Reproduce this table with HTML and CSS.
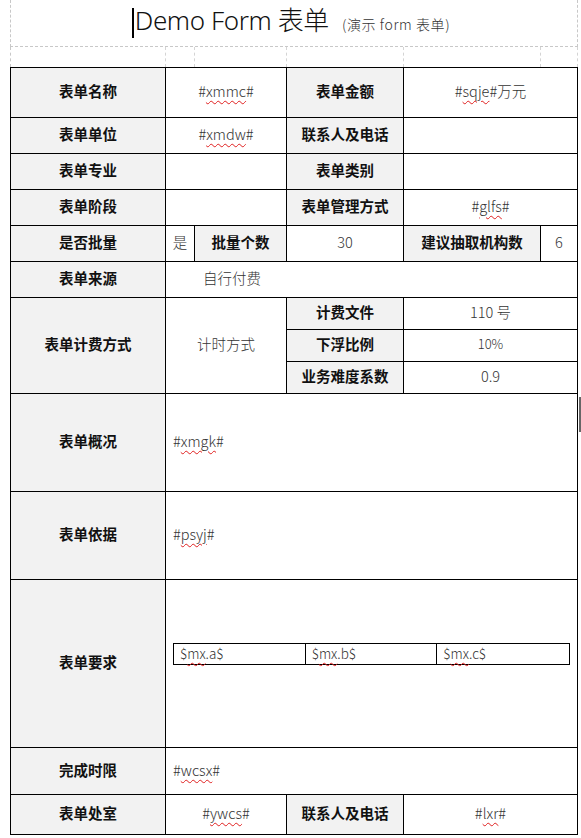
FILE: index.html
```html
<!DOCTYPE html>
<html lang="zh-CN">
<head>
<meta charset="utf-8">
<title>Demo Form 表单</title>
<link rel="stylesheet" href="styles.css">
</head>
<body>
<div class="page">
  <div class="title-block">
    <h1 class="title"><span class="caret"></span>Demo Form 表单</h1>
    <span class="subtitle">(演示 form 表单)</span>
  </div>
  <div class="ghost-row">
    <div></div><div></div><div></div><div></div><div></div><div></div>
  </div>
  <div class="form">
    <div class="c lbl">表单名称</div>
    <div class="c val s2">#<span class="sp">xmmc</span>#</div>
    <div class="c lbl">表单金额</div>
    <div class="c val s2">#<span class="sp">sqje</span>#万元</div>

    <div class="c lbl">表单单位</div>
    <div class="c val s2">#<span class="sp">xmdw</span>#</div>
    <div class="c lbl">联系人及电话</div>
    <div class="c val s2"></div>

    <div class="c lbl">表单专业</div>
    <div class="c val s2"></div>
    <div class="c lbl">表单类别</div>
    <div class="c val s2"></div>

    <div class="c lbl">表单阶段</div>
    <div class="c val s2"></div>
    <div class="c lbl">表单管理方式</div>
    <div class="c val s2">#<span class="sp">glfs</span>#</div>

    <div class="c lbl">是否批量</div>
    <div class="c val">是</div>
    <div class="c lbl">批量个数</div>
    <div class="c val">30</div>
    <div class="c lbl">建议抽取机构数</div>
    <div class="c val">6</div>

    <div class="c lbl">表单来源</div>
    <div class="c val s5 offset">自行付费</div>

    <div class="c lbl r3">表单计费方式</div>
    <div class="c val s2 r3">计时方式</div>
    <div class="c lbl">计费文件</div>
    <div class="c val s2">110 号</div>
    <div class="c lbl">下浮比例</div>
    <div class="c val s2 pct">10%</div>
    <div class="c lbl">业务难度系数</div>
    <div class="c val s2">0.9</div>

    <div class="c lbl">表单概况</div>
    <div class="c val s5 left">#<span class="sp">xmgk</span>#</div>

    <div class="c lbl">表单依据</div>
    <div class="c val s5 left">#<span class="sp">psyj</span>#</div>

    <div class="c lbl">表单要求</div>
    <div class="c val s5 req">
      <div class="inner">
        <div class="ic">$<span class="sp">mx</span>.a$</div>
        <div class="ic">$<span class="sp">mx</span>.b$</div>
        <div class="ic">$<span class="sp">mx</span>.c$</div>
      </div>
    </div>

    <div class="c lbl">完成时限</div>
    <div class="c val s5 left">#<span class="sp">wcsx</span>#</div>

    <div class="c lbl">表单处室</div>
    <div class="c val s2">#<span class="sp">ywcs</span>#</div>
    <div class="c lbl">联系人及电话</div>
    <div class="c val s2">#<span class="sp">lxr</span>#</div>
  </div>
</div>
<div class="edge-mark"></div>
</body>
</html>
```
FILE: styles.css
```css
html, body {
  margin: 0;
  padding: 0;
  background: #fff;
}
body {
  font-family: "Noto Sans CJK SC", "Noto Sans", sans-serif;
  color: #000;
  position: relative;
  height: 838px;
  overflow: hidden;
}
.page {
  margin-left: 10px;
  width: 568px;
}
.title-block {
  box-sizing: border-box;
  height: 47px;
  border-left: 1px dashed #c8c8c8;
  border-right: 1px dashed #c8c8c8;
  border-bottom: 1px dashed #c8c8c8;
  display: flex;
  justify-content: center;
  align-items: baseline;
  padding-right: 3px;
  padding-top: 1px;
}
.title {
  margin: 0;
  font-family: "Noto Sans", "Noto Sans CJK SC", sans-serif;
  font-weight: 300;
  font-size: 26px;
  letter-spacing: -0.4px;
  line-height: 38px;
  color: #111;
  position: relative;
}
.caret {
  position: absolute;
  left: -3px;
  top: 7px;
  width: 2px;
  height: 30px;
  background: #000;
}
.subtitle {
  margin-left: 13px;
  font-size: 14px;
  letter-spacing: 0.6px;
  font-weight: 300;
  color: #333;
}
.ghost-row {
  display: grid;
  grid-template-columns: 155px 29px 92px 117px 137px 37px;
  height: 20px;
  border-left: 1px dashed #c8c8c8;
}
.ghost-row div {
  border-right: 1px dashed #d4d4d4;
}
.form {
  display: grid;
  grid-template-columns: 155px 29px 92px 117px 137px 37px;
  grid-template-rows: 50px 36px 36px 36px 36px 36px 32px 32px 32px 98px 88px 168px 47px 40px;
  border-top: 1px solid #000;
  border-left: 1px solid #000;
}
.c {
  box-sizing: border-box;
  border-right: 1px solid #000;
  border-bottom: 1px solid #000;
  display: flex;
  align-items: center;
  justify-content: center;
  font-size: 14.5px;
  line-height: 18px;
  padding-bottom: 3px;
  white-space: nowrap;
}
.lbl {
  background: #f2f2f2;
  font-weight: 700;
  color: #111;
}
.val {
  font-weight: 300;
  color: #333;
}
.s2 { grid-column: span 2; }
.s5 { grid-column: span 5; }
.r3 { grid-row: span 3; }
.offset {
  justify-content: flex-start;
  padding-left: 37px;
}
.left {
  justify-content: flex-start;
  padding-left: 7px;
}
.pct { font-size: 13px; }
.sp {
  text-decoration: underline wavy #e02020;
  text-decoration-thickness: 1px;
  text-underline-offset: 3px;
}
.req {
  padding: 0 7px 20px 7px;
  align-items: center;
}
.inner {
  flex: 1;
  display: grid;
  grid-template-columns: 1fr 1fr 1fr;
  border: 1px solid #000;
  height: 22px;
  box-sizing: border-box;
}
.ic {
  font-size: 13.5px;
  padding-left: 6px;
  line-height: 18px;
  border-right: 1px solid #000;
}
.ic:last-child { border-right: none; }
.edge-mark {
  position: absolute;
  left: 579px;
  top: 397px;
  width: 2px;
  height: 35px;
  background: #666;
}
```
